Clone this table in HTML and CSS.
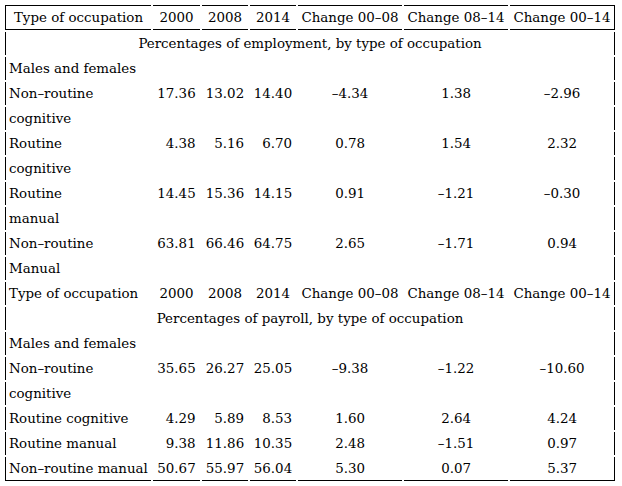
FILE: index.html
```html
<!DOCTYPE html>
<html lang="en">
<head>
<meta charset="utf-8">
<title>Occupation table</title>
<link rel="stylesheet" href="styles.css">
</head>
<body>
<table class="tbl">
  <colgroup>
    <col class="c-type"><col class="c-y1"><col class="c-y2"><col class="c-y3"><col class="c-ch1"><col class="c-ch2"><col class="c-ch3">
  </colgroup>
  <tbody>
    <tr class="head">
      <th class="first">Type of occupation</th><th>2000</th><th>2008</th><th>2014</th><th>Change 00&#8211;08</th><th>Change 08&#8211;14</th><th class="last">Change 00&#8211;14</th>
    </tr>
    <tr><td class="first last caption" colspan="7">Percentages of employment, by type of occupation</td></tr>
    <tr><td class="first last" colspan="7">Males and females</td></tr>
    <tr><td class="first">Non&#8211;routine</td><td class="n"><span class="v">17.36</span></td><td class="n"><span class="v">13.02</span></td><td class="n"><span class="v">14.40</span></td><td class="n"><span class="c">&#8211;4.34</span></td><td class="n"><span class="c">1.38</span></td><td class="n last"><span class="c">&#8211;2.96</span></td></tr>
    <tr><td class="first">cognitive</td><td colspan="6" class="last"></td></tr>
    <tr><td class="first">Routine</td><td class="n"><span class="v">4.38</span></td><td class="n"><span class="v">5.16</span></td><td class="n"><span class="v">6.70</span></td><td class="n"><span class="c">0.78</span></td><td class="n"><span class="c">1.54</span></td><td class="n last"><span class="c">2.32</span></td></tr>
    <tr><td class="first">cognitive</td><td colspan="6" class="last"></td></tr>
    <tr><td class="first">Routine</td><td class="n"><span class="v">14.45</span></td><td class="n"><span class="v">15.36</span></td><td class="n"><span class="v">14.15</span></td><td class="n"><span class="c">0.91</span></td><td class="n"><span class="c">&#8211;1.21</span></td><td class="n last"><span class="c">&#8211;0.30</span></td></tr>
    <tr><td class="first">manual</td><td colspan="6" class="last"></td></tr>
    <tr><td class="first">Non&#8211;routine</td><td class="n"><span class="v">63.81</span></td><td class="n"><span class="v">66.46</span></td><td class="n"><span class="v">64.75</span></td><td class="n"><span class="c">2.65</span></td><td class="n"><span class="c">&#8211;1.71</span></td><td class="n last"><span class="c">0.94</span></td></tr>
    <tr><td class="first">Manual</td><td colspan="6" class="last"></td></tr>
    <tr class="subhead">
      <td class="first">Type of occupation</td><td>2000</td><td>2008</td><td>2014</td><td>Change 00&#8211;08</td><td>Change 08&#8211;14</td><td class="last">Change 00&#8211;14</td>
    </tr>
    <tr><td class="first last caption" colspan="7">Percentages of payroll, by type of occupation</td></tr>
    <tr><td class="first last" colspan="7">Males and females</td></tr>
    <tr><td class="first">Non&#8211;routine</td><td class="n"><span class="v">35.65</span></td><td class="n"><span class="v">26.27</span></td><td class="n"><span class="v">25.05</span></td><td class="n"><span class="c">&#8211;9.38</span></td><td class="n"><span class="c">&#8211;1.22</span></td><td class="n last"><span class="c">&#8211;10.60</span></td></tr>
    <tr><td class="first">cognitive</td><td colspan="6" class="last"></td></tr>
    <tr><td class="first">Routine cognitive</td><td class="n"><span class="v">4.29</span></td><td class="n"><span class="v">5.89</span></td><td class="n"><span class="v">8.53</span></td><td class="n"><span class="c">1.60</span></td><td class="n"><span class="c">2.64</span></td><td class="n last"><span class="c">4.24</span></td></tr>
    <tr><td class="first">Routine manual</td><td class="n"><span class="v">9.38</span></td><td class="n"><span class="v">11.86</span></td><td class="n"><span class="v">10.35</span></td><td class="n"><span class="c">2.48</span></td><td class="n"><span class="c">&#8211;1.51</span></td><td class="n last"><span class="c">0.97</span></td></tr>
    <tr class="foot"><td class="first">Non&#8211;routine manual</td><td class="n"><span class="v">50.67</span></td><td class="n"><span class="v">55.97</span></td><td class="n"><span class="v">56.04</span></td><td class="n"><span class="c">5.30</span></td><td class="n"><span class="c">0.07</span></td><td class="n last"><span class="c">5.37</span></td></tr>
  </tbody>
</table>
</body>
</html>
```

FILE: styles.css
```css
html, body {
  background: #ffffff;
}

body {
  margin: 3px;
  font-family: "DejaVu Serif", "Liberation Serif", serif;
  font-size: 13.4px;
  color: #000000;
}

.tbl {
  width: 614px;
  border-collapse: separate;
  border-spacing: 2px;
  table-layout: fixed;
}

.c-type { width: 146px; }
.c-y1 { width: 47px; }
.c-y2 { width: 46px; }
.c-y3 { width: 46px; }
.c-ch1 { width: 104px; }
.c-ch2 { width: 104px; }
.c-ch3 { width: 105px; }

.tbl th,
.tbl td {
  height: 23px;
  padding: 0 3px;
  line-height: 21px;
  font-weight: normal;
  text-align: left;
  white-space: nowrap;
  vertical-align: middle;
}

.tbl .head th {
  border-top: 1px solid #000;
  border-bottom: 1px solid #000;
  text-align: center;
}

.tbl .subhead td {
  text-align: center;
}

.tbl .subhead td.first {
  text-align: left;
}

.tbl .first {
  border-left: 1px solid #000;
}

.tbl .last {
  border-right: 1px solid #000;
}

.tbl .foot td {
  border-bottom: 1px solid #000;
}

.tbl td.caption {
  text-align: center;
}

.tbl td.n {
  text-align: center;
}

.v,
.c {
  display: inline-block;
  text-align: right;
}

.v {
  min-width: 38px;
}

.c {
  min-width: 30px;
}
```
